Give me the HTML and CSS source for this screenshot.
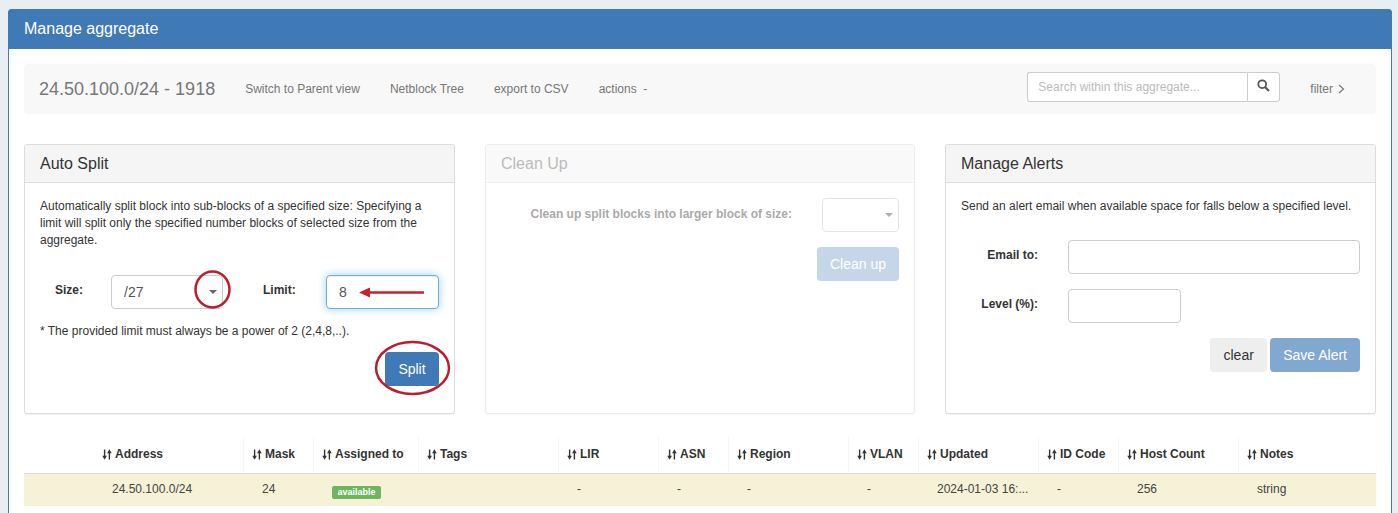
FILE: index.html
```html
<!DOCTYPE html>
<html lang="en">
<head>
<meta charset="utf-8">
<title>Manage aggregate</title>
<link rel="stylesheet" href="styles.css">
</head>
<body>
<svg class="defs" width="0" height="0" aria-hidden="true">
  <symbol id="sort" viewBox="0 0 10 11">
    <path d="M2.6 0.5v6.5" stroke="#333" stroke-width="1.4" fill="none"/>
    <path d="M0.3 6.800h4.600L2.600 10.800z" fill="#333"/>
    <path d="M7.400 10.500V4" stroke="#333" stroke-width="1.4" fill="none"/>
    <path d="M5.100 4.200h4.600L7.400 0.200z" fill="#333"/>
  </symbol>
  <symbol id="caret" viewBox="0 0 8 4"><path d="M0 0h8L4 4z"/></symbol>
</svg>
<main class="panel">
  <header class="panel-head">Manage aggregate</header>
  <div class="panel-body">
    <nav class="navbar">
      <span class="brand">24.50.100.0/24 - 1918</span>
      <a class="nav-link">Switch to Parent view</a>
      <a class="nav-link">Netblock Tree</a>
      <a class="nav-link">export to CSV</a>
      <a class="nav-link">actions&nbsp; -</a>
      <div class="search">
        <input class="search-input" placeholder="Search within this aggregate...">
        <button class="search-btn" aria-label="Search">
          <svg width="13" height="13" viewBox="0 0 13 13"><circle cx="5.2" cy="5.2" r="3.9" fill="none" stroke="#555" stroke-width="1.8"/><path d="M8 8l4 4" stroke="#555" stroke-width="2.2"/></svg>
        </button>
      </div>
      <a class="nav-link filter">filter
        <svg width="7" height="10" viewBox="0 0 7 10"><path d="M1 1l4.5 4L1 9" fill="none" stroke="#777" stroke-width="1.2"/></svg>
      </a>
    </nav>

    <div class="cards">
      <section class="card">
        <h2 class="card-head">Auto Split</h2>
        <div class="card-body">
          <p class="desc">Automatically split block into sub-blocks of a specified size: Specifying a limit will split only the specified number blocks of selected size from the aggregate.</p>
          <div class="split-row">
            <label class="lbl lbl-size">Size:</label>
            <div class="field select size-select"><span>/27</span><svg class="caret" width="8" height="4"><use href="#caret"/></svg></div>
            <label class="lbl lbl-limit">Limit:</label>
            <div class="field focus limit-field">8</div>
          </div>
          <p class="note">* The provided limit must always be a power of 2 (2,4,8,..).</p>
          <div class="actions"><button class="btn primary split-btn">Split</button></div>
        </div>
      </section>

      <section class="card disabled">
        <h2 class="card-head">Clean Up</h2>
        <div class="card-body cleanup">
          <div class="cleanup-row">
            <label class="lbl">Clean up split blocks into larger block of size:</label>
            <div class="field select cleanup-select"><svg class="caret" width="8" height="4"><use href="#caret"/></svg></div>
          </div>
          <div class="actions"><button class="btn primary">Clean up</button></div>
        </div>
      </section>

      <section class="card">
        <h2 class="card-head">Manage Alerts</h2>
        <div class="card-body">
          <p class="desc one">Send an alert email when available space for falls below a specified level.</p>
          <div class="alert-row">
            <label class="lbl alert-lbl">Email to:</label>
            <div class="field grow"></div>
          </div>
          <div class="alert-row">
            <label class="lbl alert-lbl">Level (%):</label>
            <div class="field level"></div>
          </div>
          <div class="actions alert-actions">
            <button class="btn plain">clear</button>
            <button class="btn primary faded">Save Alert</button>
          </div>
        </div>
      </section>

      <svg class="marks" width="1398" height="300" viewBox="0 0 1398 300" aria-hidden="true">
        <g fill="none" stroke="#b81f2e" stroke-width="2.500" transform="translate(-9 -144)">
          <ellipse cx="212.500" cy="289.500" rx="17" ry="18"/>
          <ellipse cx="412.500" cy="368" rx="36.500" ry="26"/>
          <path d="M368 292.500h56" stroke="#c9202e"/>
        </g>
        <path transform="translate(-9 -144)" d="M359 292.500l11-5v10z" fill="#c9202e"/>
      </svg>
    </div>

    <table class="grid">
      <colgroup>
        <col class="c1"><col class="c2"><col class="c3"><col class="c4"><col class="c5"><col class="c6">
        <col class="c7"><col class="c2"><col class="c7"><col class="c10"><col class="c7"><col class="c12">
      </colgroup>
      <thead>
        <tr>
          <th class="first"><svg class="sort" width="10" height="11"><use href="#sort"/></svg>Address</th>
          <th><svg class="sort" width="10" height="11"><use href="#sort"/></svg>Mask</th>
          <th><svg class="sort" width="10" height="11"><use href="#sort"/></svg>Assigned to</th>
          <th><svg class="sort" width="10" height="11"><use href="#sort"/></svg>Tags</th>
          <th><svg class="sort" width="10" height="11"><use href="#sort"/></svg>LIR</th>
          <th><svg class="sort" width="10" height="11"><use href="#sort"/></svg>ASN</th>
          <th><svg class="sort" width="10" height="11"><use href="#sort"/></svg>Region</th>
          <th><svg class="sort" width="10" height="11"><use href="#sort"/></svg>VLAN</th>
          <th><svg class="sort" width="10" height="11"><use href="#sort"/></svg>Updated</th>
          <th><svg class="sort" width="10" height="11"><use href="#sort"/></svg>ID Code</th>
          <th><svg class="sort" width="10" height="11"><use href="#sort"/></svg>Host Count</th>
          <th class="last"><svg class="sort" width="10" height="11"><use href="#sort"/></svg>Notes</th>
        </tr>
      </thead>
      <tbody>
        <tr>
          <td class="first">24.50.100.0/24</td>
          <td>24</td>
          <td><span class="badge">available</span></td>
          <td></td>
          <td>-</td>
          <td>-</td>
          <td>-</td>
          <td>-</td>
          <td>2024-01-03 16:...</td>
          <td>-</td>
          <td>256</td>
          <td>string</td>
        </tr>
      </tbody>
    </table>
  </div>
</main>
</body>
</html>
```

FILE: styles.css
```css
* { box-sizing: border-box; }
html, body { height: 100%; }
body {
  margin: 0;
  padding: 9px 6px 0 8px;
  height: 513px;
  overflow: hidden;
  background: #e9eef2;
  font-family: "Liberation Sans", Arial, sans-serif;
  font-size: 12px;
  line-height: 17px;
  color: #333;
}
.defs { position: absolute; }
.panel {
  height: 520px;
  background: #fff;
  border: 1px solid #3f7ab6;
  border-radius: 4px;
}
.panel-head {
  height: 40px;
  margin: -1px -1px 0;
  padding: 11px 16px 0;
  border-radius: 4px 4px 0 0;
  background: #3f7ab6;
  color: #fff;
  font-size: 16px;
  line-height: 18px;
}
.panel-body { padding: 15px 15px 0; }

.navbar {
  display: flex;
  align-items: center;
  height: 50px;
  padding: 0 15px;
  border-radius: 4px;
  background: #f8f8f8;
}
.brand { font-size: 18px; color: #777; margin-right: 30px; }
.nav-link { color: #777; margin-right: 30px; }
.search { display: flex; margin-left: auto; margin-top: -4px; margin-right: 30px; }
.search-input {
  width: 220px;
  height: 30px;
  padding: 0 10px;
  border: 1px solid #ccc;
  border-right: 0;
  border-radius: 3px 0 0 3px;
  background: #fff;
  font: 12px "Liberation Sans", Arial, sans-serif;
}
.search-input::placeholder { color: #bbb; opacity: 1; }
.search-btn {
  display: flex;
  align-items: center;
  justify-content: center;
  width: 33px;
  height: 30px;
  padding: 0 0 3px;
  border: 1px solid #ccc;
  border-radius: 0 3px 3px 0;
  background: #fff;
}
.filter { margin: 0 16px 0 0; display: flex; align-items: center; gap: 5px; }

.cards {
  position: relative;
  display: flex;
  gap: 30px;
  margin-top: 30px;
}
.card {
  width: 431px;
  height: 270px;
  border: 1px solid #ddd;
  border-radius: 3px;
  background: #fff;
  box-shadow: 0 1px 1px rgba(0, 0, 0, .05);
}
.card.disabled { width: 430px; }
.card-head {
  height: 38px;
  margin: 0;
  padding: 10px 15px 0;
  border-bottom: 1px solid #ddd;
  border-radius: 3px 3px 0 0;
  background: #f5f5f5;
  font-size: 16px;
  font-weight: 400;
  line-height: 18px;
}
.card-body { padding: 15px; }
.desc { margin: 0; height: 51px; }
.desc.one { height: 17px; }
.lbl { font-weight: 700; }

.field {
  height: 34px;
  border: 1px solid #ccc;
  border-radius: 4px;
  background: #fff;
  font-size: 14px;
  line-height: 32px;
  color: #555;
  padding: 0 12px;
}
.select { position: relative; }
.caret { position: absolute; right: 5px; top: 14px; fill: #666; }
.focus {
  border-color: #66afe9;
  box-shadow: inset 0 1px 1px rgba(0, 0, 0, .075), 0 0 8px rgba(102, 175, 233, .6);
}

.split-row { display: flex; align-items: center; margin-top: 26px; }
.lbl-size { width: 71px; padding-left: 15px; margin-top: -3px; }
.size-select { width: 112px; }
.lbl-limit { width: 103px; padding-left: 40px; margin-top: -3px; }
.limit-field { width: 113px; }
.note { margin: 14px 0 0; }

.actions { display: flex; justify-content: flex-end; }
.btn {
  height: 34px;
  border: 1px solid transparent;
  border-radius: 4px;
  padding: 0 12px;
  font: 14px/20px "Liberation Sans", Arial, sans-serif;
}
.primary { background: #3f7ab6; color: #fff; }
.split-btn { width: 54px; padding: 0; }
.card-body > .actions { margin-top: 12px; }
.plain { background: #eee; color: #333; width: 57px; padding: 0; }
.faded { opacity: .65; }
.alert-actions { gap: 3px; margin-top: 15px !important; }

.disabled { opacity: .5; }
.disabled .card-head { color: #777; }
.cleanup-row { display: flex; align-items: center; justify-content: flex-end; }
.cleanup-row .lbl { margin-right: 30px; margin-top: -1px; color: #555; }
.cleanup-select { width: 77px; }
.cleanup .actions { margin-top: 15px; }
.cleanup .primary { opacity: .6; width: 82px; padding: 0; }

.alert-row { display: flex; align-items: center; margin-top: 15px; }
.desc.one + .alert-row { margin-top: 25px; }
.alert-lbl { width: 77px; text-align: right; margin-right: 30px; margin-top: -3px; }
.grow { flex: 1; }
.level { width: 113px; }

.marks { position: absolute; left: -15px; top: 0; overflow: visible; pointer-events: none; }

.grid {
  width: 1352px;
  margin-top: 23px;
  border-collapse: collapse;
  table-layout: fixed;
}
.c1 { width: 219px; }
.c2 { width: 70px; }
.c3 { width: 105px; }
.c4 { width: 140px; }
.c5 { width: 100px; }
.c6 { width: 70px; }
.c7 { width: 120px; }
.c10 { width: 80px; }
.c12 { width: 138px; }
th {
  height: 36px;
  padding: 0 0 0 9px;
  border-bottom: 1px solid #ddd;
  font-weight: 700;
  text-align: left;
  white-space: nowrap;
  position: relative;
}
th + th { box-shadow: inset 1px 0 0 #f6f6f6; }
th.first { padding-left: 78px; }
.sort { vertical-align: -2px; margin-right: 3px; }
tbody tr { background: #f5f2d8; }
td {
  height: 33px;
  padding: 0 0 0 19px;
  white-space: nowrap;
  color: #444;
}
td.first { padding-left: 88px; }
.badge {
  display: inline-block;
  width: 49px;
  text-align: center;
  border-radius: 2px;
  background: #6db55f;
  color: #fff;
  font-size: 9px;
  font-weight: 700;
  line-height: 13px;
  vertical-align: -3px;
}
```
